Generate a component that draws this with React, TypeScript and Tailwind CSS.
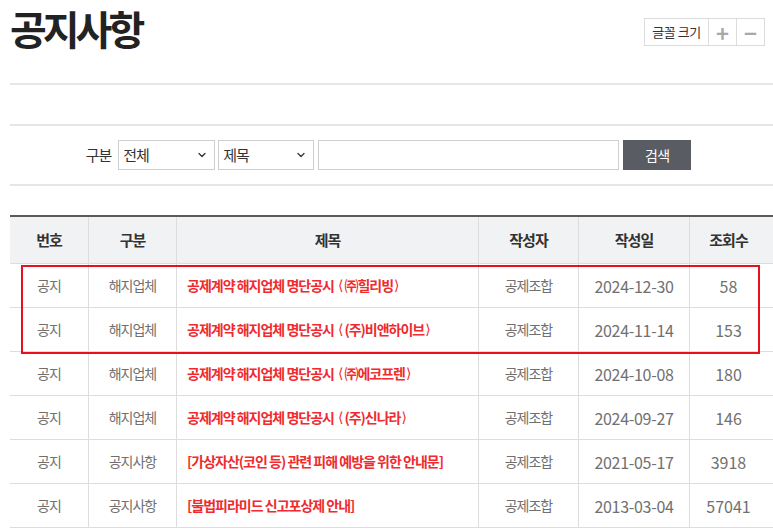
import React from 'react';
import { ChevronDown } from 'lucide-react';

interface Notice {
  no: string;
  category: string;
  title: string;
  writer: string;
  date: string;
  views: string;
}

const notices: Notice[] = [
  { no: '공지', category: '해지업체', title: '공제계약 해지업체 명단공시 ⟨㈜힐리빙⟩', writer: '공제조합', date: '2024-12-30', views: '58' },
  { no: '공지', category: '해지업체', title: '공제계약 해지업체 명단공시 ⟨(주)비앤하이브⟩', writer: '공제조합', date: '2024-11-14', views: '153' },
  { no: '공지', category: '해지업체', title: '공제계약 해지업체 명단공시 ⟨㈜에코프렌⟩', writer: '공제조합', date: '2024-10-08', views: '180' },
  { no: '공지', category: '해지업체', title: '공제계약 해지업체 명단공시 ⟨(주)신나라⟩', writer: '공제조합', date: '2024-09-27', views: '146' },
  { no: '공지', category: '공지사항', title: '[가상자산(코인 등) 관련 피해 예방을 위한 안내문]', writer: '공제조합', date: '2021-05-17', views: '3918' },
  { no: '공지', category: '공지사항', title: '[불법피라미드 신고포상제 안내]', writer: '공제조합', date: '2013-03-04', views: '57041' }
];

const cols = 'grid grid-cols-[78px_88px_302px_100px_111px_1fr]';

function Divider() {
  return <div className="h-[2px] bg-[#e6e6e6]" />;
}

// angle brackets come from DejaVu so they stay narrow
function Title({ text }: { text: string }) {
  const parts = text.split(/(⟨|⟩)/);
  return <>
      {parts.map((p, i) => p === '⟨' ? <span key={i} className="font-['DejaVu_Sans'] font-normal tracking-normal ml-[4px] pr-[1px]">{p}</span> : p === '⟩' ? <span key={i} className="font-['DejaVu_Sans'] font-normal tracking-normal pl-[1px]">{p}</span> : <span key={i}>{p}</span>)}
    </>;
}

function FakeSelect({ label, width }: { label: string; width: string }) {
  return <div className={`${width} h-[30px] border border-[#cfcfcf] bg-white flex items-center justify-between pl-[4px] pr-[6px]`}>
      <span className="text-[15px] tracking-[-1px] text-[#333]">{label}</span>
      <ChevronDown size={12} strokeWidth={2.5} className="text-[#333]" />
    </div>;
}

export default function App() {
  return <div className="w-[773px] h-[532px] overflow-hidden bg-white pl-[10px] font-['Noto_Sans_CJK_KR','Noto_Sans',sans-serif]">
      {/* Header */}
      <div className="h-[83px] flex justify-between items-start">
        <h1 className="text-[40px] leading-[52px] mt-[2px] font-bold tracking-[-4px] text-[#222]">공지사항</h1>
        <div className="mt-[18px] mr-[8px] flex h-[28px] border border-[#dcdcdc] text-[13px]">
          <div className="w-[63px] flex items-center justify-center tracking-[-0.5px] text-[#333]">글꼴 크기</div>
          <div className="w-[28px] flex items-center justify-center border-l border-[#dcdcdc] text-[#a8a8a8] text-[22px] font-bold leading-none">+</div>
          <div className="w-[28px] flex items-center justify-center border-l border-[#dcdcdc] text-[#a8a8a8] text-[22px] font-bold leading-none">−</div>
        </div>
      </div>
      <Divider />
      <div className="h-[39px]" />
      <Divider />

      {/* Search */}
      <div className="h-[58px] flex items-center justify-center pr-[6px]">
        <span className="text-[15px] tracking-[-1px] text-[#333] mr-[7px]">구분</span>
        <FakeSelect label="전체" width="w-[97px]" />
        <div className="w-[3px]" />
        <FakeSelect label="제목" width="w-[96px]" />
        <input className="ml-[4px] w-[301px] h-[30px] border border-[#cfcfcf] outline-none" />
        <button className="ml-[4px] w-[68px] h-[30px] bg-[#595d63] text-white text-[14px] tracking-[-0.5px]">검색</button>
      </div>
      <Divider />
      <div className="h-[29px]" />

      {/* Table */}
      <div className="relative border-t-2 border-[#5a5a5a]">
        <div className={`${cols} h-[47px] bg-[#f1f2f4] border-b border-[#dddddd] text-[15px] font-bold text-[#333] tracking-[-1px]`}>
          {['번호', '구분', '제목', '작성자', '작성일', '조회수'].map((h, i) => <div key={h} className={`flex items-center justify-center ${i > 0 ? 'border-l border-[#dddddd]' : ''} ${i === 5 ? 'pr-[6px]' : ''}`}>
              {h}
            </div>)}
        </div>
        {notices.map(n => <div key={n.date} className={`${cols} h-[44px] border-b border-[#dddddd] text-[#707070]`}>
            <div className="flex items-center justify-center text-[14px] tracking-[-1px]">{n.no}</div>
            <div className="flex items-center justify-center border-l border-[#dddddd] text-[14px] tracking-[-1px]">{n.category}</div>
            <div className="flex items-center pl-[10px] border-l border-[#dddddd] text-[14px] tracking-[-1px] font-bold text-[#ef2b30] whitespace-nowrap">
              <Title text={n.title} />
            </div>
            <div className="flex items-center justify-center border-l border-[#dddddd] text-[14px] tracking-[-1px]">{n.writer}</div>
            <div className="flex items-center justify-center border-l border-[#dddddd] text-[16px] tracking-[-0.3px]">{n.date}</div>
            <div className="flex items-center justify-center border-l border-[#dddddd] text-[16px] pr-[6px]">{n.views}</div>
          </div>)}

        {/* Highlight box */}
        <div className="absolute left-[11px] top-[48px] w-[739px] h-[89px] border-2 border-[#e8101c] pointer-events-none" />
      </div>
    </div>;
}
